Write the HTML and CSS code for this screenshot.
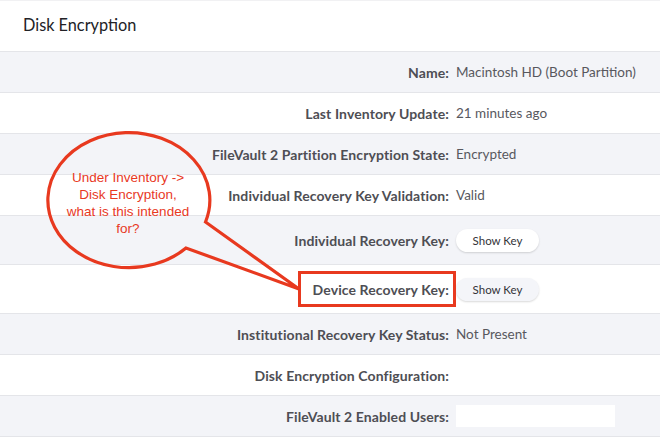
FILE: index.html
```html
<!DOCTYPE html>
<html>
<head>
<meta charset="utf-8">
<link rel="stylesheet" href="styles.css">
</head>
<body>
<div class="panel">
  <div class="header">Disk Encryption</div>
  <div class="rows">
    <div class="row alt"><div class="label">Name:</div><div class="value">Macintosh HD (Boot Partition)</div></div>
    <div class="row"><div class="label">Last Inventory Update:</div><div class="value">21 minutes ago</div></div>
    <div class="row alt"><div class="label">FileVault 2 Partition Encryption State:</div><div class="value">Encrypted</div></div>
    <div class="row"><div class="label">Individual Recovery Key Validation:</div><div class="value">Valid</div></div>
    <div class="row alt tall"><div class="label">Individual Recovery Key:</div><div class="value"><button class="pill">Show Key</button></div></div>
    <div class="row tall"><div class="label"><span class="marked">Device Recovery Key:</span></div><div class="value"><button class="pill">Show Key</button></div></div>
    <div class="row alt"><div class="label">Institutional Recovery Key Status:</div><div class="value">Not Present</div></div>
    <div class="row"><div class="label">Disk Encryption Configuration:</div><div class="value"></div></div>
    <div class="row alt"><div class="label">FileVault 2 Enabled Users:</div><div class="value"><div class="blank"></div></div></div>
  </div>
  <div class="callout">
    <svg class="bubble" width="320" height="200" viewBox="0 0 320 200">
      <path d="M205.5 102 A81 67.5 0 1 0 186 128 L299 169 Z" fill="none" stroke="#e8391f" stroke-width="3.2" stroke-linejoin="miter"/>
    </svg>
    <div class="callout-text">Under Inventory -&gt;<br>Disk Encryption,<br>what is this intended<br>for?</div>
  </div>
</div>
</body>
</html>
```
FILE: styles.css
```css
* { box-sizing: border-box; }
html, body { margin: 0; padding: 0; background: #fff; }
body { font-family: Lato, "Open Sans", sans-serif; color: #4b4b50; }
.panel { position: relative; width: 660px; height: 443px; overflow: hidden; background: #fff; }
.header {
  height: 51px;
  border-top: 1px solid #f1f1f3;
  padding: 14px 0 0 23px;
  font-size: 16.3px;
  color: #222226;
}
.rows { display: flex; flex-direction: column; border-bottom: 1px solid #e4e5e9; }
.row {
  display: grid;
  grid-template-columns: 449px 1fr;
  column-gap: 7px;
  align-items: center;
  height: 41px;
  border-top: 1px solid #e4e5e9;
  background: #fff;
}
.row.alt { background: #f3f4f8; }
.row.tall { height: 49px; }
.label {
  text-align: right;
  font-weight: 700;
  font-size: 14px;
  letter-spacing: 0.1px;
  color: #4e4e54;
}
.value { font-size: 13.5px; color: #58585e; }
.pill {
  font-family: Lato, sans-serif;
  font-size: 11.5px;
  color: #333338;
  background: #f4f5f9;
  border: none;
  border-radius: 12px;
  width: 83px;
  height: 23px;
  padding: 0;
  box-shadow: 0 1px 2px rgba(0,0,0,0.15);
}
.row.alt .pill { background: #fff; }
.blank { width: 159px; height: 22px; background: #fff; }
.marked { position: relative; }
.marked::after {
  content: "";
  position: absolute;
  left: -15px; right: -7px;
  top: -10px; bottom: -9px;
  border: 3px solid #e8391f;
}
.callout { position: absolute; left: 0; top: 120px; width: 320px; height: 200px; pointer-events: none; }
.bubble { position: absolute; left: 0; top: 0; }
.callout-text {
  position: absolute;
  left: 48px; top: 49px;
  width: 160px;
  text-align: center;
  font-family: "Liberation Sans", Arial, sans-serif;
  font-size: 13.5px;
  line-height: 17px;
  color: #e8391f;
}
```
